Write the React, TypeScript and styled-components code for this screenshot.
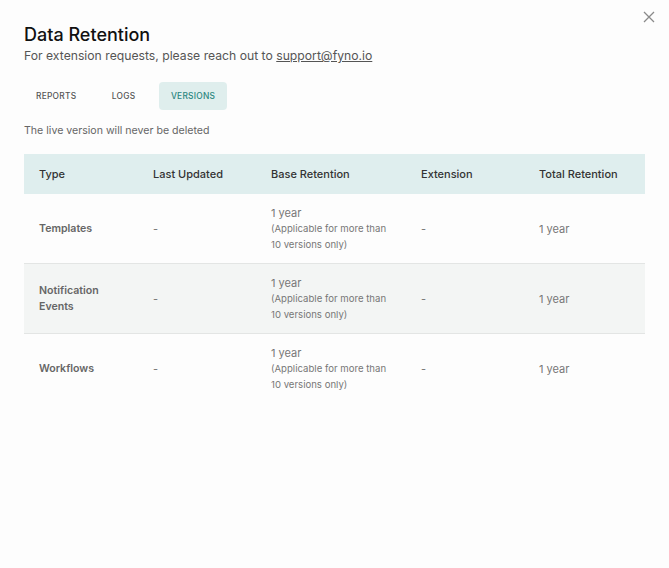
import styled, { createGlobalStyle } from 'styled-components'

const Global = createGlobalStyle`
  html, body {
    margin: 0;
    padding: 0;
    background: #fdfdfd;
    font-family: Inter, 'Noto Sans', sans-serif;
  }
`

const Modal = styled.div`
  position: relative;
  width: 669px;
  height: 568px;
  box-sizing: border-box;
  padding: 23px 24px 0 24px;
  background: #fdfdfd;
`

const Close = styled.button`
  position: absolute;
  top: 10px;
  right: 13px;
  width: 14px;
  height: 14px;
  padding: 0;
  border: 0;
  background: none;
  cursor: pointer;
`

const Title = styled.h1`
  margin: 0;
  font-size: 18px;
  line-height: 23px;
  font-weight: 500;
  color: #111;
`

const Subtitle = styled.p`
  margin: 1px 0 0;
  font-size: 12.2px;
  line-height: 17px;
  color: #555;

  a {
    color: #555;
    text-decoration: underline;
  }
`

const Tabs = styled.div`
  display: flex;
  gap: 11.5px;
  margin-top: 18px;
`

const Tab = styled.button<{ $active?: boolean }>`
  height: 28px;
  padding: 0 12px;
  border: 0;
  border-radius: 4px;
  font-family: inherit;
  font-size: 8.4px;
  font-weight: 500;
  letter-spacing: 0.25px;
  text-transform: uppercase;
  background: ${(p) => (p.$active ? '#dfeeed' : 'transparent')};
  color: ${(p) => (p.$active ? '#2b8680' : '#555')};
`

const Note = styled.p`
  margin: 14px 0 0;
  font-size: 10.6px;
  line-height: 14px;
  color: #666;
`

const Table = styled.table`
  margin-top: 16px;
  width: 621px;
  border-collapse: collapse;
  table-layout: fixed;
`

const Th = styled.th<{ $w: number }>`
  box-sizing: border-box;
  width: ${(p) => p.$w}px;
  height: 40px;
  padding: 0 0 0 15px;
  background: #dfeeee;
  text-align: left;
  font-size: 11px;
  font-weight: 500;
  color: #333;
`

const Row = styled.tr<{ $shade?: boolean; $first?: boolean }>`
  background: ${(p) => (p.$shade ? '#f3f5f4' : 'transparent')};
  border-top: ${(p) => (p.$first ? 'none' : '1px solid #e3e5e4')};
`

const Td = styled.td<{ $strong?: boolean }>`
  height: 69px;
  padding: 0 0 0 15px;
  font-size: ${(p) => (p.$strong ? '10.6px' : '11px')};
  line-height: 16px;
  font-weight: ${(p) => (p.$strong ? 600 : 400)};
  color: ${(p) => (p.$strong ? '#666' : '#777')};
  vertical-align: middle;
`

const Small = styled.div`
  font-size: 9.6px;
  line-height: 16px;
  color: #777;
`

const columns = [
  { label: 'Type', w: 114 },
  { label: 'Last Updated', w: 118 },
  { label: 'Base Retention', w: 150 },
  { label: 'Extension', w: 118 },
  { label: 'Total Retention', w: 121 },
]

const rows = [
  { type: ['Templates'] },
  { type: ['Notification', 'Events'] },
  { type: ['Workflows'] },
]

export default function App() {
  return (
    <>
      <Global />
      <Modal>
        <Close aria-label="Close">
          <svg width="14" height="14" viewBox="0 0 14 14">
            <path d="M2 2 L12 12 M12 2 L2 12" stroke="#8a8a8a" strokeWidth="1.3" />
          </svg>
        </Close>
        <Title>Data Retention</Title>
        <Subtitle>
          For extension requests, please reach out to <a href="#">support@fyno.io</a>
        </Subtitle>
        <Tabs>
          <Tab>Reports</Tab>
          <Tab>Logs</Tab>
          <Tab $active>Versions</Tab>
        </Tabs>
        <Note>The live version will never be deleted</Note>
        <Table>
          <thead>
            <tr>
              {columns.map((c) => (
                <Th key={c.label} $w={c.w}>
                  {c.label}
                </Th>
              ))}
            </tr>
          </thead>
          <tbody>
            {rows.map((r, i) => (
              <Row key={i} $shade={i === 1} $first={i === 0}>
                <Td $strong>
                  {r.type.map((t) => (
                    <div key={t}>{t}</div>
                  ))}
                </Td>
                <Td>-</Td>
                <Td>
                  <div>1 year</div>
                  <Small>(Applicable for more than</Small>
                  <Small>10 versions only)</Small>
                </Td>
                <Td>-</Td>
                <Td>1 year</Td>
              </Row>
            ))}
          </tbody>
        </Table>
      </Modal>
    </>
  )
}
